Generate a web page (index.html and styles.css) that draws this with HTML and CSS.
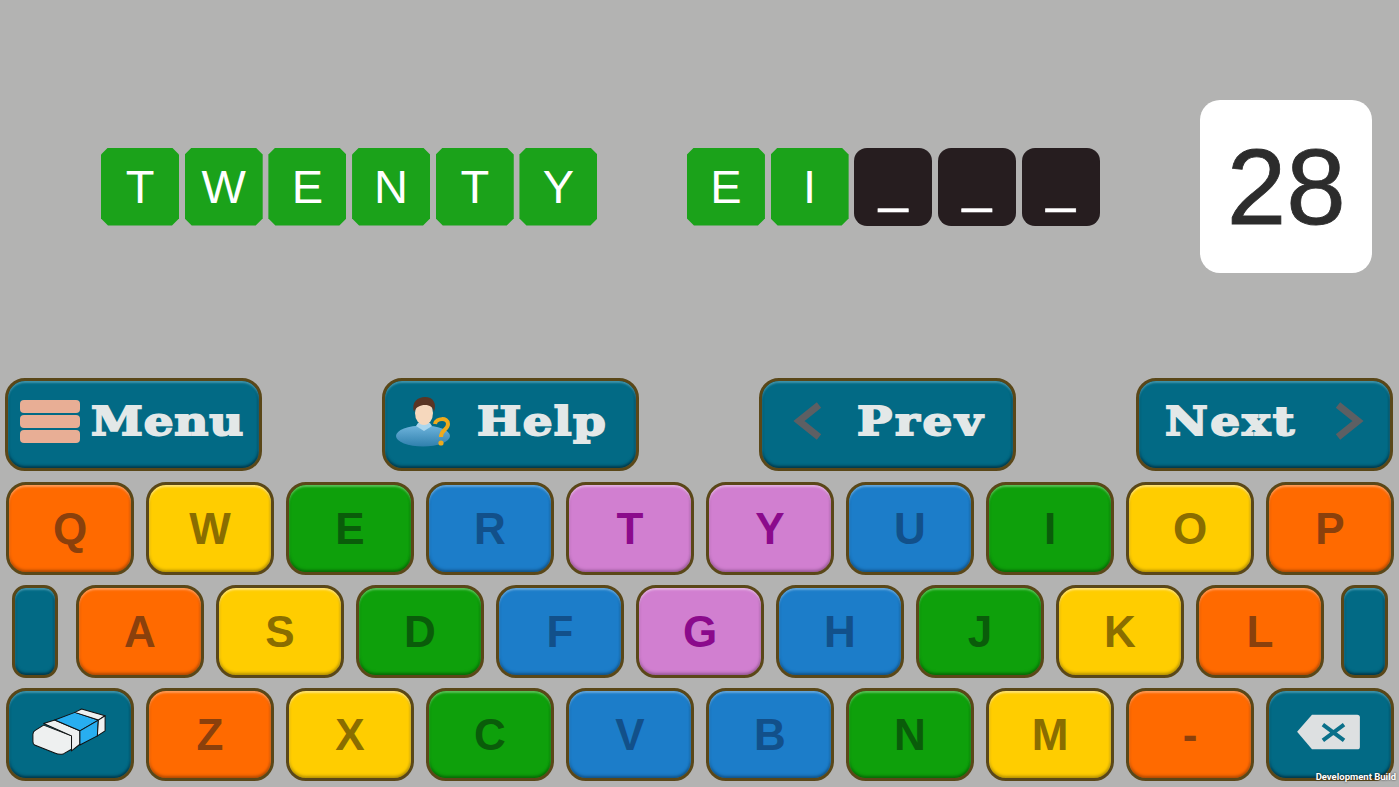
FILE: index.html
```html
<!DOCTYPE html>
<html lang="en">
<head>
    <meta charset="UTF-8">
    <title>Spell the number</title>
    <link rel="stylesheet" href="styles.css">
</head>
<body>
    <div class="board">
        <div class="word_area">
            <div class="word">
                <span class="tile">T</span><span class="tile">W</span><span class="tile">E</span><span class="tile">N</span><span class="tile">T</span><span class="tile">Y</span>
            </div>
            <div class="word">
                <span class="tile">E</span><span class="tile">I</span><span class="tile empty">_</span><span class="tile empty">_</span><span class="tile empty">_</span>
            </div>
            <div class="score">28</div>
        </div>

        <div class="nav_row">
            <button class="btn btn_menu">
                <span class="bars"><i></i><i></i><i></i></span>
                <span class="label">Menu</span>
            </button>
            <button class="btn btn_help">
                <svg class="help_icon" viewBox="0 0 56 50">
                    <defs>
                        <linearGradient id="shirt" x1="0" y1="0" x2="0" y2="1">
                            <stop offset="0" stop-color="#6fb4dc"/>
                            <stop offset="1" stop-color="#2f80ad"/>
                        </linearGradient>
                    </defs>
                    <ellipse cx="27" cy="39" rx="27" ry="10.5" fill="url(#shirt)"/>
                    <path d="M20 29 L28 34 L36 29 L34 26 L22 26 Z" fill="#a9d6ee"/>
                    <ellipse cx="28" cy="16" rx="9" ry="12" fill="#f6d8bd"/>
                    <path d="M18 15 C15 5 22 0 29 0 C37 0 41 6 38 15 C37 10 34 8 29 8 C24 8 20 10 18 15 Z" fill="#5a3524"/>
                    <path d="M39 27 C40 21 52 20 52 27 C52 33 45 32 45 40" fill="none" stroke="#eeaa1c" stroke-width="4"/>
                    <circle cx="45" cy="46" r="2.6" fill="#eeaa1c"/>
                </svg>
                <span class="label">Help</span>
            </button>
            <button class="btn btn_prev">
                <svg class="chevron" viewBox="0 0 32 38"><path d="M27 3 L7 19 L27 35" fill="none" stroke="#5d5f63" stroke-width="7"/></svg>
                <span class="label">Prev</span>
            </button>
            <button class="btn btn_next">
                <span class="label">Next</span>
                <svg class="chevron" viewBox="0 0 32 38"><path d="M5 3 L25 19 L5 35" fill="none" stroke="#5d5f63" stroke-width="7"/></svg>
            </button>
        </div>

        <div class="key_row row_top">
            <button class="key orange">Q</button>
            <button class="key yellow">W</button>
            <button class="key green">E</button>
            <button class="key blue">R</button>
            <button class="key pink">T</button>
            <button class="key pink">Y</button>
            <button class="key blue">U</button>
            <button class="key green">I</button>
            <button class="key yellow">O</button>
            <button class="key orange">P</button>
        </div>
        <div class="key_row row_mid">
            <span class="key teal stub"></span>
            <button class="key orange">A</button>
            <button class="key yellow">S</button>
            <button class="key green">D</button>
            <button class="key blue">F</button>
            <button class="key pink">G</button>
            <button class="key blue">H</button>
            <button class="key green">J</button>
            <button class="key yellow">K</button>
            <button class="key orange">L</button>
            <span class="key teal stub"></span>
        </div>
        <div class="key_row row_low">
            <button class="key teal">
                <svg class="eraser" viewBox="95 82 225 140">
                    <g stroke="#111" stroke-width="3" stroke-linejoin="round">
                        <path d="M100 160 Q100 152 108 148 L132 133 L215 165 L215 205 L192 218 Q180 222 165 216 L105 192 Q100 190 100 182 Z" fill="#eef0f0"/>
                        <path d="M132 128 L165 118 L240 150 L240 190 L215 210 L215 165 Z" fill="#eef0f0"/>
                        <path d="M165 118 L225 95 L295 118 L240 150 Z" fill="#28aef0"/>
                        <path d="M240 150 L295 118 L292 165 L240 192 Z" fill="#28aef0"/>
                        <path d="M225 95 L245 85 L315 105 L295 118 Z" fill="#eef0f0"/>
                        <path d="M295 118 L315 105 L315 150 L292 165 Z" fill="#eef0f0"/>
                    </g>
                </svg>
            </button>
            <button class="key orange">Z</button>
            <button class="key yellow">X</button>
            <button class="key green">C</button>
            <button class="key blue">V</button>
            <button class="key blue">B</button>
            <button class="key green">N</button>
            <button class="key yellow">M</button>
            <button class="key orange">-</button>
            <button class="key teal">
                <svg class="backspace" viewBox="135 95 200 115">
                    <path d="M140 152 L185 100 L322 100 Q330 100 330 108 L330 197 Q330 205 322 205 L185 205 Z" fill="#dde0e1"/>
                    <path d="M218 130 L282 178 M282 130 L218 178" stroke="#0a708a" stroke-width="12" fill="none"/>
                </svg>
            </button>
        </div>
    </div>
    <div class="dev_build">Development Build</div>
</body>
</html>
```

FILE: styles.css
```css
html, body{margin:0; padding:0; height:100%;}
body{background:#b3b3b2; overflow:hidden; font-family:"Liberation Sans", Arial, sans-serif; position:relative;}
button{font-family:inherit; padding:0; cursor:pointer;}

/* top part: the word tiles and the number */
.word_area{height:378px; box-sizing:border-box; padding:0 0 5px 101px; display:flex; align-items:center;}
.word{display:flex; gap:5.7px; margin-right:89.5px;}
.word + .word{margin-right:100.5px;}
.tile{width:78px; height:78px; display:flex; align-items:center; justify-content:center;
    background:#1ba21a; color:#fff; font-size:47px; line-height:1;
    clip-path:polygon(7px 0, calc(100% - 7px) 0, 100% 7px, 100% calc(100% - 7px), calc(100% - 7px) 100%, 7px 100%, 0 calc(100% - 7px), 0 7px);}
.tile.empty{background:#261d1f; border-radius:13px; clip-path:none; align-items:flex-start; line-height:72px; font-size:52px; -webkit-text-stroke:0.6px #fff;}
.score{width:172px; height:173px; display:flex; align-items:center; justify-content:center;
    background:#fff; border-radius:20px; color:#2c2c2c; font-size:107px; -webkit-text-stroke:0.8px #2c2c2c;}

/* Menu / Help / Prev / Next */
.nav_row{display:flex; gap:120px; padding-left:5px; margin-bottom:11px;}
.btn{width:257px; height:93px; box-sizing:border-box; padding-bottom:7px; display:flex; align-items:center;
    border:3.5px solid #5a4718; border-radius:20px; background:#026a85; color:#e3e8e8;
    box-shadow:inset 0 2px 2px #3f93aa, inset 0 -2px 3px #01394b, inset -1px 0 2px #024a5e;}
.label{font-family:"DejaVu Serif", serif; font-weight:bold; font-size:39px; line-height:1; -webkit-text-stroke:1.8px #e3e8e8; display:inline-block; transform-origin:left center; transform:scaleX(1.2);}
.btn_menu{padding-left:11.5px; gap:11px;}
.btn_menu .label{letter-spacing:0.7px;}
.btn_help{padding-left:10.5px; gap:25px;}
.btn_help .label{letter-spacing:1.2px;}
.btn_prev{padding-left:29.5px; gap:33px;}
.btn_prev .label{letter-spacing:2.4px;}
.btn_next{padding-left:25.5px; gap:0;}
.btn_next .label{letter-spacing:2px;}
.btn_next .chevron{margin-left:auto; margin-right:25px;}
.bars{display:flex; flex-direction:column; gap:2px; width:60px;}
.bars i{display:block; height:13px; border-radius:4px; background:#e8ae95;}
.help_icon{width:56px; height:50px; margin-top:2px;}
.chevron{width:32px; height:38px;}

/* the keyboard */
.key_row{display:flex; gap:12px; margin-bottom:10px;}
.row_top, .row_low{padding-left:6px;}
.row_mid{padding-left:12px;}
.key{width:128px; height:93px; box-sizing:border-box; display:flex; align-items:center; justify-content:center;
    border:3.5px solid #5a4718; border-radius:20px; font-size:44px; font-weight:bold; line-height:1;}
.row_mid .stub{width:46px; border-radius:14px; margin-right:6px;}
.row_mid .stub:last-child{margin-left:5px; margin-right:0; width:47px;}
.orange{background:#ff6a00; color:#8a400c; box-shadow:inset 0 2px 2px #ff9a55, inset 0 -2px 3px #b34a00, inset -1px 0 2px #c85300;}
.yellow{background:#ffcd00; color:#8a6d00; box-shadow:inset 0 2px 2px #ffe373, inset 0 -2px 3px #b89400, inset -1px 0 2px #c9a200;}
.green{background:#0ea00b; color:#0a5c0a; box-shadow:inset 0 2px 2px #58c056, inset 0 -2px 3px #076b05, inset -1px 0 2px #087a06;}
.blue{background:#1c7dc9; color:#12508a; box-shadow:inset 0 2px 2px #62a6dc, inset 0 -2px 3px #11548a, inset -1px 0 2px #135f9a;}
.pink{background:#d17fd0; color:#8b0a8c; box-shadow:inset 0 2px 2px #e3b0e2, inset 0 -2px 3px #9a5a99, inset -1px 0 2px #a767a6;}
.teal{background:#026a85; box-shadow:inset 0 2px 2px #3f93aa, inset 0 -2px 3px #01394b, inset -1px 0 2px #024a5e;}
.eraser{width:76px; height:47px; margin:0 3px 6px 0;}
.backspace{width:67px; height:38px; margin:0 3px 6px 0;}

.dev_build{position:absolute; right:3px; bottom:5px; font-family:Roboto, sans-serif; font-weight:bold; font-size:9.5px; line-height:11px; color:#fff; text-shadow:0 0 2px #222;}
```
